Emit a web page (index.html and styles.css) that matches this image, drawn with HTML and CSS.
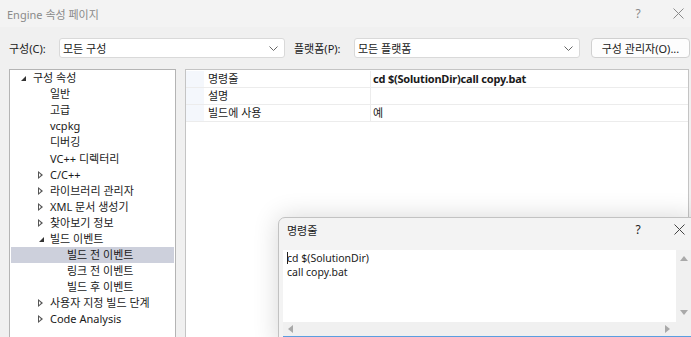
FILE: index.html
```html
<!DOCTYPE html>
<html lang="ko">
<head>
    <meta charset="UTF-8">
    <title>Engine 속성 페이지</title>
    <link rel="stylesheet" href="styles.css">
</head>
<body>
    <div class="window">
        <header class="titlebar">
            <span class="title">Engine 속성 페이지</span>
            <div class="title-buttons">
                <span class="help-btn">?</span>
                <span class="close-btn">
                    <svg width="11" height="11" viewBox="0 0 11 11"><path d="M0.5 0.5 L10.5 10.5 M10.5 0.5 L0.5 10.5" stroke="#8a8a8a" stroke-width="1"/></svg>
                </span>
            </div>
        </header>

        <div class="config-row">
            <label class="config-label">구성(C):</label>
            <div class="combo">
                <span>모든 구성</span>
                <svg width="9" height="5" viewBox="0 0 9 5"><path d="M0.5 0.5 L4.5 4.5 L8.5 0.5" fill="none" stroke="#666" stroke-width="1"/></svg>
            </div>
            <label class="config-label platform-label">플랫폼(P):</label>
            <div class="combo">
                <span>모든 플랫폼</span>
                <svg width="9" height="5" viewBox="0 0 9 5"><path d="M0.5 0.5 L4.5 4.5 L8.5 0.5" fill="none" stroke="#666" stroke-width="1"/></svg>
            </div>
            <button class="manager-btn">구성 관리자(O)...</button>
        </div>

        <div class="panes">
            <ul class="tree">
                <li class="node lvl-0"><span class="twisty open"></span>구성 속성</li>
                <li class="node lvl-1"><span class="twisty"></span>일반</li>
                <li class="node lvl-1"><span class="twisty"></span>고급</li>
                <li class="node lvl-1"><span class="twisty"></span>vcpkg</li>
                <li class="node lvl-1"><span class="twisty"></span>디버깅</li>
                <li class="node lvl-1"><span class="twisty"></span>VC++ 디렉터리</li>
                <li class="node lvl-0b"><span class="twisty closed"></span>C/C++</li>
                <li class="node lvl-0b"><span class="twisty closed"></span>라이브러리 관리자</li>
                <li class="node lvl-0b"><span class="twisty closed"></span>XML 문서 생성기</li>
                <li class="node lvl-0b"><span class="twisty closed"></span>찾아보기 정보</li>
                <li class="node lvl-0b"><span class="twisty open"></span>빌드 이벤트</li>
                <li class="node lvl-2 selected"><span class="twisty"></span>빌드 전 이벤트</li>
                <li class="node lvl-2"><span class="twisty"></span>링크 전 이벤트</li>
                <li class="node lvl-2"><span class="twisty"></span>빌드 후 이벤트</li>
                <li class="node lvl-0b"><span class="twisty closed"></span>사용자 지정 빌드 단계</li>
                <li class="node lvl-0b"><span class="twisty closed"></span>Code Analysis</li>
            </ul>

            <div class="grid">
                <div class="grid-row">
                    <span class="gutter"></span>
                    <span class="prop-name">명령줄</span>
                    <span class="prop-value strong">cd $(SolutionDir)call copy.bat</span>
                </div>
                <div class="grid-row">
                    <span class="gutter"></span>
                    <span class="prop-name">설명</span>
                    <span class="prop-value"></span>
                </div>
                <div class="grid-row">
                    <span class="gutter"></span>
                    <span class="prop-name">빌드에 사용</span>
                    <span class="prop-value">예</span>
                </div>
            </div>
        </div>

        <!-- popup editor for the command line -->
        <div class="dialog">
            <div class="dialog-title">
                <span>명령줄</span>
                <span class="dlg-help">?</span>
                <span class="dlg-close">
                    <svg width="11" height="11" viewBox="0 0 11 11"><path d="M0.5 0.5 L10.5 10.5 M10.5 0.5 L0.5 10.5" stroke="#444" stroke-width="1"/></svg>
                </span>
            </div>
            <div class="editbox">
                <div class="edit-text"><span class="caret"></span>cd $(SolutionDir)<br>call copy.bat</div>
                <div class="vscroll">
                    <svg width="8" height="5" viewBox="0 0 8 5"><path d="M4 0 L8 5 L0 5 Z" fill="#a9a9a9"/></svg>
                    <svg width="8" height="5" viewBox="0 0 8 5"><path d="M0 0 L8 0 L4 5 Z" fill="#a9a9a9"/></svg>
                </div>
                <div class="hscroll">
                    <svg width="5" height="8" viewBox="0 0 5 8"><path d="M0 4 L5 0 L5 8 Z" fill="#a9a9a9"/></svg>
                    <svg width="5" height="8" viewBox="0 0 5 8"><path d="M5 4 L0 0 L0 8 Z" fill="#a9a9a9"/></svg>
                </div>
                <div class="corner"></div>
            </div>
        </div>
    </div>
</body>
</html>
```

FILE: styles.css
```css
:root {
    --bg-window: #f0f0f0;
    --bg-title: #f3f3f3;
    --text-main: #1a1a1a;
    --text-dim: #8a8a8a;
    --border-panel: #b4b4b4;
    --row-line: #ececec;
    --selected: #cdd0dc;
}

* {
    box-sizing: border-box;
    margin: 0;
    padding: 0;
}

body {
    font-family: "Noto Sans", "Noto Sans CJK KR", sans-serif;
    font-size: 11px;
    color: var(--text-main);
    background-color: var(--bg-window);
}

.window {
    position: relative;
    width: 691px;
    height: 337px;
    overflow: hidden;
    background-color: var(--bg-window);
}

.titlebar {
    height: 27px;
    display: flex;
    justify-content: space-between;
    align-items: center;
    padding-left: 7px;
    background-color: var(--bg-title);
}

.title {
    color: var(--text-dim);
    font-size: 11px;
}

.title-buttons {
    display: flex;
    align-items: center;
}

.help-btn {
    width: 54px;
    text-align: center;
    color: var(--text-dim);
    font-size: 12px;
}

.close-btn {
    width: 26px;
    display: flex;
    justify-content: center;
}

.config-row {
    display: flex;
    align-items: center;
    padding: 11px 0 0 9px;
    margin-bottom: 11px;
}

.config-label {
    width: 50px;
}

.platform-label {
    width: 60px;
    margin-left: 9px;
}

.combo {
    width: 226px;
    height: 20px;
    display: flex;
    justify-content: space-between;
    align-items: center;
    padding: 0 6px 0 3px;
    background-color: #fff;
    border: 1px solid #d9d9d9;
    border-radius: 3px;
}

.manager-btn {
    width: 99px;
    height: 20px;
    margin-left: 11px;
    font-family: inherit;
    font-size: 11px;
    color: var(--text-main);
    background-color: #fdfdfd;
    border: 1px solid #d0d0d0;
    border-radius: 4px;
}

.panes {
    display: flex;
    gap: 9px;
    padding-left: 9px;
    height: 280px;
}

.tree {
    width: 167px;
    list-style: none;
    background-color: #fff;
    border: 1px solid var(--border-panel);
}

.node {
    height: 16.1px;
    line-height: 16px;
    display: flex;
    align-items: center;
    white-space: nowrap;
    margin: 0 1px;
}

.lvl-0 { padding-left: 9px; }
.lvl-1, .lvl-0b { padding-left: 26px; }
.lvl-2 { padding-left: 43px; }

.node.selected {
    background-color: var(--selected);
}

.twisty {
    width: 13px;
    height: 16px;
    flex-shrink: 0;
    position: relative;
}

.twisty.open::before {
    content: "";
    position: absolute;
    left: 1px;
    top: 6px;
    border-style: solid;
    border-width: 0 0 5px 5px;
    border-color: transparent transparent #333 transparent;
}

.lvl-0b .twisty.open::before {
    left: 2px;
}

.twisty.closed::before {
    content: "";
    position: absolute;
    left: 1px;
    top: 4px;
    width: 0;
    height: 0;
    border-style: solid;
    border-width: 4px 0 4px 5px;
    border-color: transparent transparent transparent #555;
}

.twisty.closed::after {
    content: "";
    position: absolute;
    left: 2px;
    top: 6px;
    border-style: solid;
    border-width: 2px 0 2px 2.5px;
    border-color: transparent transparent transparent #fff;
}

.grid {
    width: 504px;
    background-color: #fff;
    border: 1px solid #c4c4c4;
    padding-top: 1px;
}

.grid-row {
    display: grid;
    grid-template-columns: 18px 167px 1fr;
    height: 17px;
    line-height: 16px;
    border-bottom: 1px solid var(--row-line);
}

.gutter {
    background-color: #f4f7fc;
}

.prop-name {
    padding-left: 4px;
    border-right: 1px solid var(--row-line);
}

.prop-value {
    padding-left: 2px;
}

.prop-value.strong {
    font-weight: 700;
    letter-spacing: -0.2px;
}

.dialog {
    position: absolute;
    left: 278px;
    top: 217px;
    width: 418px;
    height: 130px;
    background-color: #f3f3f3;
    border: 1px solid #c2c2c2;
    border-top-left-radius: 7px;
    box-shadow: 0 0 26px rgba(0, 0, 0, 0.16);
    padding: 0 4px;
}

.dialog-title {
    height: 23px;
    display: flex;
    align-items: center;
    padding-left: 4px;
    margin-bottom: 9px;
}

.dlg-help {
    margin-left: auto;
    width: 20px;
    text-align: center;
    font-size: 12px;
    margin-right: 25px;
}

.dlg-close {
    width: 12px;
    display: flex;
    justify-content: center;
    margin-right: 6px;
}

.editbox {
    display: grid;
    grid-template-columns: 393px 15px;
    grid-template-rows: 72px 14px;
    border-bottom: 1px solid #5b9ee0;
}

.edit-text {
    background-color: #fff;
    padding: 1px 0 0 4px;
    line-height: 14px;
    font-size: 10.5px;
}

.caret {
    display: inline-block;
    width: 1px;
    height: 12px;
    margin-right: -1px;
    vertical-align: -2px;
    background-color: #222;
}

.vscroll {
    display: flex;
    flex-direction: column;
    justify-content: space-between;
    align-items: center;
    padding: 6px 0 7px;
    background-color: var(--bg-window);
}

.hscroll {
    display: flex;
    justify-content: space-between;
    align-items: center;
    padding: 0 6px 0 5px;
    background-color: var(--bg-window);
}

.corner {
    background-color: var(--bg-window);
}
```
